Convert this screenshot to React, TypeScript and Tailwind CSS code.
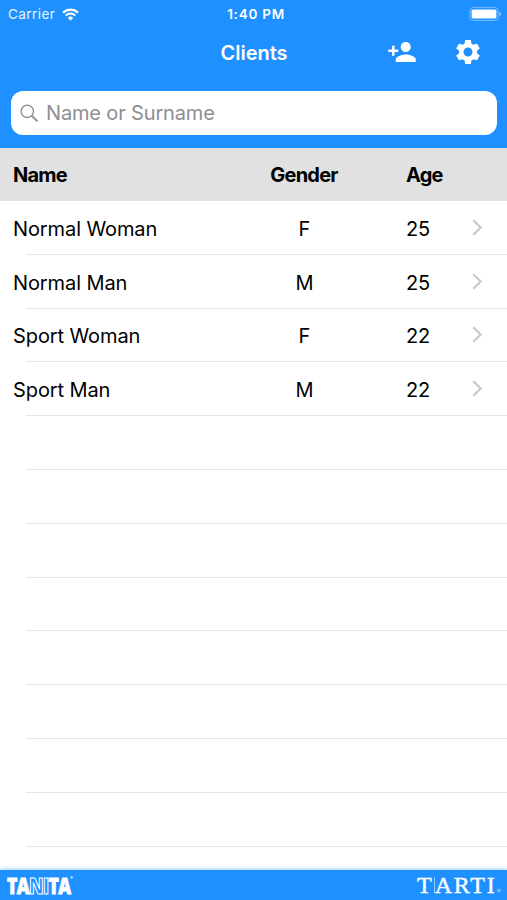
import { MdPersonAdd, MdSettings } from "react-icons/md";

type Client = {
  name: string;
  gender: string;
  age: number;
};

const clients: Client[] = [
  { name: "Normal Woman", gender: "F", age: 25 },
  { name: "Normal Man", gender: "M", age: 25 },
  { name: "Sport Woman", gender: "F", age: 22 },
  { name: "Sport Man", gender: "M", age: 22 },
];

const emptyRows = [0, 1, 2, 3, 4, 5, 6, 7, 8];

function StatusBar() {
  return (
    <div className="grid h-7 grid-cols-[1fr_auto_1fr] items-center pl-[8px] pr-[5px] text-[13.5px]">
      <div className="flex items-center gap-[7px]">
        <span className="tracking-[0.45px] text-white/90">Carrier</span>
        <svg width="17" height="13" viewBox="0 0 17 13" fill="none" stroke="white">
          <path d="M1 4.7a10.6 10.6 0 0 1 15 0" strokeWidth="2.1" />
          <path d="M3.7 7.6a6.8 6.8 0 0 1 9.6 0" strokeWidth="2" />
          <path d="M8.5 12.6L5.8 9.9a3.8 3.8 0 0 1 5.4 0z" fill="white" stroke="none" />
        </svg>
      </div>
      <span className="pl-[2px] text-center text-[13.5px] font-semibold tracking-[0.75px]">1:40 PM</span>
      <svg className="justify-self-end" width="33" height="14" viewBox="0 0 33 14">
        <rect x="0.9" y="0.6" width="28.2" height="12.8" rx="3.4" fill="none" stroke="white" strokeOpacity="0.4" />
        <rect x="2.6" y="2.4" width="24.8" height="9.2" rx="1.8" fill="white" />
        <path d="M30.4 4.8v4.4c1-.4 1.7-1.2 1.7-2.2s-.7-1.8-1.7-2.2z" fill="white" fillOpacity="0.5" />
      </svg>
    </div>
  );
}

function Header() {
  return (
    <header className="h-[148px] shrink-0 bg-[#1e90ff] text-white">
      <StatusBar />
      <div className="grid h-12 grid-cols-[1fr_auto_1fr] items-center">
        <h1 className="col-start-2 pl-px pt-px text-[20px] font-semibold">Clients</h1>
        <div className="flex items-center justify-end gap-[36px] pr-6">
          <button aria-label="Add client"><MdPersonAdd size={30} /></button>
          <button aria-label="Settings"><MdSettings size={30} /></button>
        </div>
      </div>
      <div className="pl-[11px] pr-[10px] pt-[15px]">
        <div className="flex h-11 items-center gap-[7px] rounded-[12px] bg-white pl-[9px]">
          <svg width="19" height="19" viewBox="0 0 19 19" fill="none" stroke="#8e8e93">
            <circle cx="7.3" cy="7.3" r="6.2" strokeWidth="1.3" />
            <path d="M11.8 11.8l5.6 5.6" strokeWidth="2" />
          </svg>
          <span className="text-[20px] tracking-[-0.15px] text-[#8e8e93]">Name or Surname</span>
        </div>
      </div>
    </header>
  );
}

function ClientRow({ name, gender, age }: Client) {
  return (
    <div className="h-[53.8px] shrink-0">
      <div className="grid h-[52.8px] grid-cols-[251px_80px_62px_1fr] items-center pl-[13px] text-[20px]">
        <span className="whitespace-nowrap pt-[3px] tracking-[-0.1px]">{name}</span>
        <span className="pl-px pt-[3px] text-center">{gender}</span>
        <span className="w-0 justify-self-end whitespace-nowrap pt-[3px] tracking-[-0.3px]">{age}</span>
        <svg className="ml-[66px]" width="11" height="17" viewBox="0 0 11 17" fill="none" stroke="#c7c7cc" strokeWidth="2.1">
          <path d="M1.3 1.3l7.4 7.2-7.4 7.2" />
        </svg>
      </div>
      <div className="ml-[26px] h-px bg-[#e6e6e8]" />
    </div>
  );
}

function Footer() {
  return (
    <footer className="flex h-[30px] shrink-0 items-center justify-between bg-[#1e90ff] pl-[7px] pr-[6px] text-white shadow-[0_-1px_4px_rgba(30,144,255,0.45)]">
      <div className="flex origin-left scale-x-[0.8] items-start font-['Open_Sans','Noto_Sans',sans-serif] text-[22px] leading-[30px] font-extrabold tracking-[-0.8px]">
        <span className="[-webkit-text-stroke:0.8px_white]">TA</span>
        <span className="text-[#1e90ff] [-webkit-text-stroke:1.2px_white]">NI</span>
        <span className="[-webkit-text-stroke:0.8px_white]">TA</span>
        <span className="pt-[6px] text-[4px] leading-none">®</span>
      </div>
      <div className="flex items-baseline pt-[6px] font-['Liberation_Serif',serif] text-[24px] leading-[24px]">
        <span className="[-webkit-text-stroke:0.4px_white]">T</span>
        <span className="ml-[2px] h-4 w-px bg-white/50" />
        <span className="tracking-[1.8px] [-webkit-text-stroke:0.4px_white]">ARTI</span>
        <span className="text-[6px]">®</span>
      </div>
    </footer>
  );
}

export default function App() {
  return (
    <div className="flex h-[900px] w-[507px] flex-col overflow-hidden bg-white font-['Inter',sans-serif] text-black">
      <Header />
      <div className="grid h-[53px] shrink-0 grid-cols-[251px_80px_62px_1fr] items-center bg-[#e1e1e1] pl-[13px] pt-px text-[20px] font-bold tracking-[-0.75px]">
        <span>Name</span>
        <span className="text-center">Gender</span>
        <span className="w-0 justify-self-end">Age</span>
      </div>
      <main className="flex min-h-0 flex-1 flex-col overflow-hidden">
        {clients.map((client) => (
          <ClientRow key={client.name} {...client} />
        ))}
        {emptyRows.map((row) => (
          <div key={row} className="flex h-[53.8px] shrink-0 items-end">
            <div className="ml-[26px] h-px flex-1 bg-[#e6e6e8]" />
          </div>
        ))}
      </main>
      <Footer />
    </div>
  );
}
